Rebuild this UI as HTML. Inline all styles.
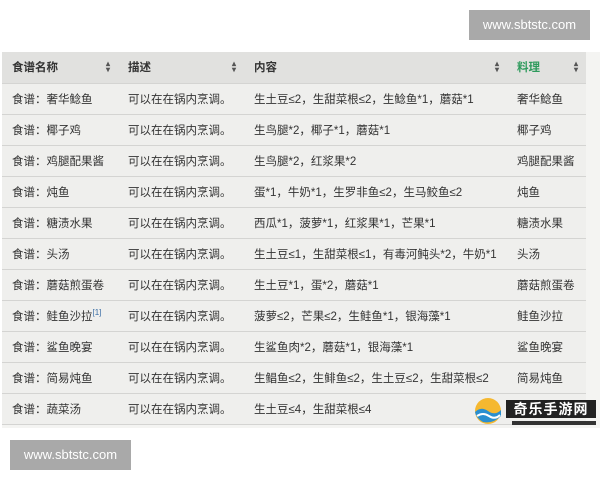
<!DOCTYPE html>
<html><head><meta charset="utf-8"><style>
*{margin:0;padding:0;box-sizing:border-box}
body{width:600px;height:480px;background:#fff;position:relative;overflow:hidden;font-family:"Liberation Sans","Noto Sans CJK SC",sans-serif;color:#333;font-size:11.5px}
.wrap{position:absolute;left:2px;top:52px;width:598px;height:376px;background:#f4f4f2}
table{border-collapse:collapse;width:584px;position:absolute;left:0;top:0}
td,th{height:31px;border-bottom:1px solid #d4d4d2;text-align:left;padding-left:10px;white-space:nowrap;position:relative;background:#efefed}
th{background:#e1e1df;font-weight:bold;color:#333}
th span{position:absolute;right:8px;top:9px;font-size:8px;line-height:6px;color:#555}
.g{color:#2e9a5c}
.wm{position:absolute;background:#a9a9a9;color:#fff;font-size:13px;text-align:center;line-height:30px}
sup{font-size:8px;color:#3a6ea5}
</style></head><body>
<div class="wm" style="left:469px;top:10px;width:121px;height:30px">www.sbtstc.com</div>
<div class="wrap">
<table>
<tr><th style="width:116px">食谱名称<span>▴<br>▾</span></th><th style="width:126px">描述<span>▴<br>▾</span></th><th style="width:263px">内容<span>▴<br>▾</span></th><th class="g">料理<span>▴<br>▾</span></th></tr>
<tr><td>食谱：奢华鲶鱼</td><td>可以在在锅内烹调。</td><td>生土豆≤2，生甜菜根≤2，生鲶鱼*1，蘑菇*1</td><td>奢华鲶鱼</td></tr>
<tr><td>食谱：椰子鸡</td><td>可以在在锅内烹调。</td><td>生鸟腿*2，椰子*1，蘑菇*1</td><td>椰子鸡</td></tr>
<tr><td>食谱：鸡腿配果酱</td><td>可以在在锅内烹调。</td><td>生鸟腿*2，红浆果*2</td><td>鸡腿配果酱</td></tr>
<tr><td>食谱：炖鱼</td><td>可以在在锅内烹调。</td><td>蛋*1，牛奶*1，生罗非鱼≤2，生马鲛鱼≤2</td><td>炖鱼</td></tr>
<tr><td>食谱：糖渍水果</td><td>可以在在锅内烹调。</td><td>西瓜*1，菠萝*1，红浆果*1，芒果*1</td><td>糖渍水果</td></tr>
<tr><td>食谱：头汤</td><td>可以在在锅内烹调。</td><td>生土豆≤1，生甜菜根≤1，有毒河鲀头*2，牛奶*1</td><td>头汤</td></tr>
<tr><td>食谱：蘑菇煎蛋卷</td><td>可以在在锅内烹调。</td><td>生土豆*1，蛋*2，蘑菇*1</td><td>蘑菇煎蛋卷</td></tr>
<tr><td>食谱：鲑鱼沙拉<sup>[1]</sup></td><td>可以在在锅内烹调。</td><td>菠萝≤2，芒果≤2，生鲑鱼*1，银海藻*1</td><td>鲑鱼沙拉</td></tr>
<tr><td>食谱：鲨鱼晚宴</td><td>可以在在锅内烹调。</td><td>生鲨鱼肉*2，蘑菇*1，银海藻*1</td><td>鲨鱼晚宴</td></tr>
<tr><td>食谱：简易炖鱼</td><td>可以在在锅内烹调。</td><td>生鲳鱼≤2，生鲱鱼≤2，生土豆≤2，生甜菜根≤2</td><td>简易炖鱼</td></tr>
<tr><td>食谱：蔬菜汤</td><td>可以在在锅内烹调。</td><td>生土豆≤4，生甜菜根≤4</td><td></td></tr>
</table>
</div>
<svg style="position:absolute;left:473px;top:396px" width="30" height="30" viewBox="0 0 30 30"><circle cx="15" cy="15" r="13" fill="#f5b830"/><path d="M2 16 Q8 10 15 15 T28 14 L28 20 Q20 28 10 26 Q3 22 2 16Z" fill="#2a8fd0"/><path d="M4 20 Q10 16 16 20 T27 19" stroke="#fff" stroke-width="2" fill="none"/></svg>
<div style="position:absolute;left:506px;top:400px;width:90px;height:18px;background:#222;color:#fff;font-size:14px;font-weight:bold;line-height:18px;text-align:center;letter-spacing:1px">奇乐手游网</div>
<div style="position:absolute;left:512px;top:421px;width:84px;height:4px;background:#333"></div>
<div class="wm" style="left:10px;top:440px;width:121px;height:30px">www.sbtstc.com</div>
</body></html>
